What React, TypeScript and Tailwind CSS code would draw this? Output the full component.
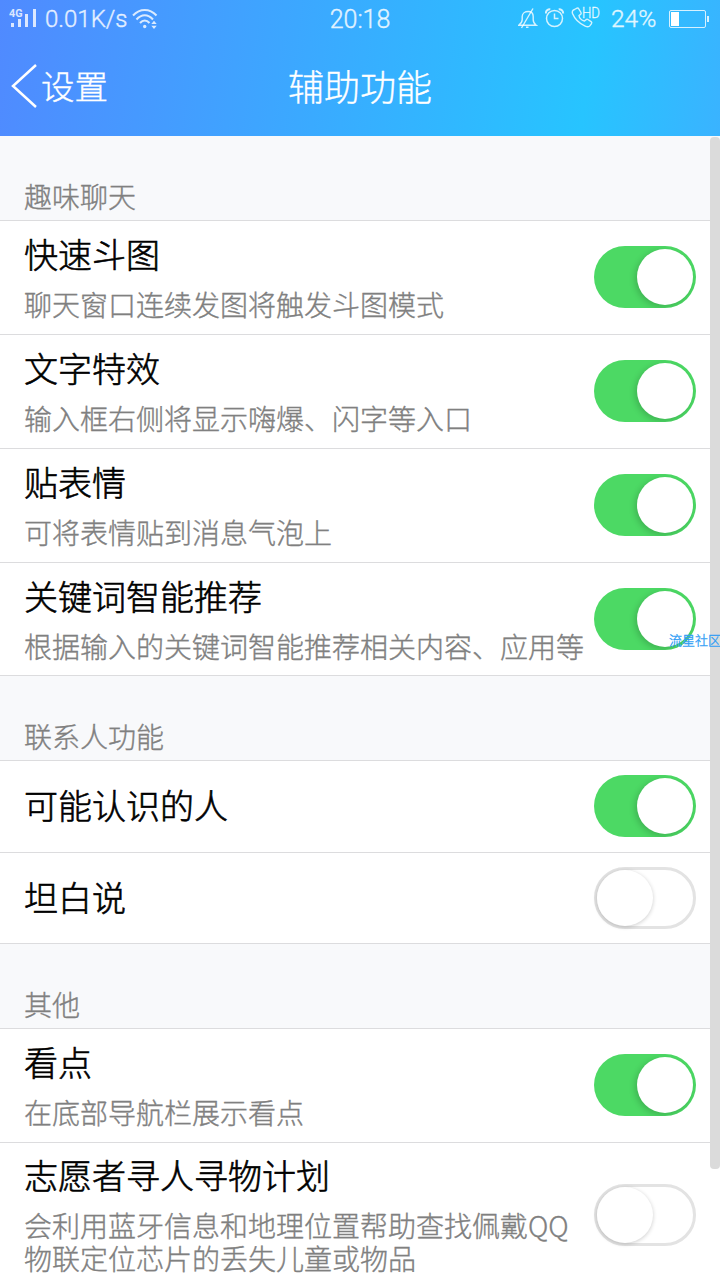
import clsx from "clsx";

type Item = { title: string; desc?: string; on: boolean; height: string };
type Section = { name: string; items: Item[] };

const sections: Section[] = [
  {
    name: "趣味聊天",
    items: [
      { title: "快速斗图", desc: "聊天窗口连续发图将触发斗图模式", on: true, height: "h-[114px] pb-px" },
      { title: "文字特效", desc: "输入框右侧将显示嗨爆、闪字等入口", on: true, height: "h-[114px] pb-px" },
      { title: "贴表情", desc: "可将表情贴到消息气泡上", on: true, height: "h-[114px] pb-px" },
      { title: "关键词智能推荐", desc: "根据输入的关键词智能推荐相关内容、应用等", on: true, height: "h-[113px]" },
    ],
  },
  {
    name: "联系人功能",
    items: [
      { title: "可能认识的人", on: true, height: "h-[92px] pb-px" },
      { title: "坦白说", on: false, height: "h-[91px]" },
    ],
  },
  {
    name: "其他",
    items: [
      { title: "看点", desc: "在底部导航栏展示看点", on: true, height: "h-[114px] pb-px" },
      {
        title: "志愿者寻人寻物计划",
        desc: "会利用蓝牙信息和地理位置帮助查找佩戴QQ物联定位芯片的丢失儿童或物品",
        on: false,
        height: "h-[145px]",
      },
    ],
  },
];

function StatusBar() {
  return (
    <div className="relative flex h-[38px] items-center justify-between text-white/80">
      <div className="flex items-center pl-[9px]">
        <svg width="30" height="22" viewBox="0 0 30 22" fill="currentColor">
          <text x="0" y="8.500" fontSize="10" fontWeight="700" fontFamily="Roboto, sans-serif" textLength="13.500" lengthAdjust="spacingAndGlyphs">4G</text>
          <rect x="2" y="15" width="3" height="4" />
          <rect x="9" y="11" width="3" height="8" />
          <rect x="16" y="6" width="3" height="13" />
          <rect x="24" y="1" width="3" height="18" />
        </svg>
        <span className="ml-[6px] w-[84px] text-[24px] leading-[38px] whitespace-nowrap">0.01K/s</span>
        <svg className="ml-[3px]" width="26" height="22" viewBox="0 0 26 22" fill="none" stroke="currentColor" strokeWidth="2">
          <path d="M1 7.500C8 0 17.500 0 24.500 7.500" />
          <path d="M4.500 11.500C9.500 5.800 16 5.800 21 11.500" />
          <path d="M8 15C11 11.500 14.500 11.500 17.500 15" />
          <circle cx="12.700" cy="18.500" r="1.700" fill="currentColor" stroke="none" />
          <path d="M22 12.800l2.700 3.200h-5.400zM22 21l2.700-3.200h-5.400z" fill="currentColor" stroke="none" />
        </svg>
      </div>
      <span className="absolute left-1/2 -translate-x-1/2 text-[25px] leading-[39px]">20:18</span>
      <div className="flex items-center pr-[11px]">
        <svg width="20" height="22" viewBox="0 0 20 22" fill="none" stroke="currentColor" strokeWidth="1.400">
          <path d="M0.700 17.300h17.500c-2-1.500-3-3-3-5.500V8.500c0-3.200-2-5-5-5s-6 1.800-6 5v3.300c0 2.500-1.500 4-3.500 5.500z" />
          <path d="M15 0.500L3.500 20M8 19.300h2.500" />
        </svg>
        <svg className="ml-[7px]" width="20" height="22" viewBox="0 0 20 22" fill="none" stroke="currentColor" strokeWidth="1.500">
          <circle cx="9.500" cy="10.500" r="8" />
          <path d="M9.500 5.500v5h4" />
          <path d="M0.800 5.500C0.800 3 2.800 1 5.300 1.200M18.200 5.500c0-2.500-2-4.500-4.500-4.300" strokeWidth="2" />
        </svg>
        <svg className="ml-[6px]" width="31" height="26" viewBox="0 0 31 26" fill="none" stroke="currentColor" strokeWidth="1.400">
          <path d="M3.500 3.500L6 2.200c.8-.3 1.400 0 1.800.7L10 6.500c.4.800.2 1.400-.4 1.900L8 9.500c.3 2.500 2.800 4.800 5.500 5.500l1.500-1.300c.6-.5 1.200-.6 1.900-.2l3.200 2.200c.7.500.9 1.200.4 1.900l-1.700 2.300c-1 1.200-2.800 1-4.600.2C8 17.300 3.300 12 1.500 7.500.9 5.500 1.500 4 3.500 3.500z" />
          <text x="11" y="11.500" strokeWidth="0.300" fontSize="14.500" fontFamily="Roboto, sans-serif" fill="currentColor" textLength="18" lengthAdjust="spacingAndGlyphs">HD</text>
        </svg>
        <span className="ml-[9px] w-[48px] text-[24.500px] leading-[38px] whitespace-nowrap">24%</span>
        <svg className="mb-px ml-[10px]" width="40" height="20" viewBox="0 0 40 20" fill="none" stroke="currentColor">
          <rect x="0.500" y="1.500" width="36" height="17" rx="1.500" />
          <rect x="2" y="3" width="8" height="14" fill="white" stroke="none" />
          <rect x="38" y="7" width="2" height="6" fill="currentColor" stroke="none" />
        </svg>
      </div>
    </div>
  );
}

function Toggle({ on }: { on: boolean }) {
  return (
    <div
      className={clsx(
        "flex h-[62px] w-[102px] shrink-0 items-center rounded-full",
        on ? "justify-end overflow-hidden bg-[#4cd964] pr-[3px]" : "border-[3px] border-[#e3e3e3] bg-white",
      )}
    >
      <div
        className={clsx(
          "size-[56px] rounded-full bg-white",
          on ? "shadow-[-2px_2px_6px_rgba(0,0,0,0.18)]" : "shadow-[0_1px_4px_rgba(0,0,0,0.2)]",
        )}
      />
    </div>
  );
}

function Row({ item }: { item: Item }) {
  return (
    <div className={clsx("flex items-center justify-between border-b border-[#dcdcde] bg-white pr-6 pl-6", item.height)}>
      <div className="w-[562px]">
        <div
          className={clsx(
            "text-[34px] leading-[50px] whitespace-nowrap text-black [-webkit-text-stroke:0.6px]",
            item.desc ? "-mt-[5px]" : "-mt-[3px]",
          )}
        >
          {item.title}
        </div>
        {item.desc && <div className="pt-[9px] text-[28px] leading-[33px] break-all text-[#808080]">{item.desc}</div>}
      </div>
      <Toggle on={item.on} />
    </div>
  );
}

export default function App() {
  return (
    <div className="relative h-[1280px] w-[720px] overflow-hidden bg-[#f8f9fb] font-['Noto_Sans_CJK_SC',sans-serif] font-light [-webkit-text-stroke:0.35px]">
      <header className="h-[136px] bg-[linear-gradient(98deg,#508aff_0%,#40a2ff_33%,#27c4ff_81%,#3ab3ff_100%)] font-[Roboto,'Noto_Sans_CJK_SC',sans-serif]">
        <StatusBar />
        <div className="relative flex h-[96px] items-center pl-[11px] text-white">
          <svg width="27" height="44" viewBox="0 0 27 44" fill="none" stroke="currentColor" strokeWidth="2.500">
            <path d="M25 1L2 22L25 43" />
          </svg>
          <span className="mt-[5px] ml-[3px] text-[33.500px]">设置</span>
          <h1 className="absolute top-[24px] left-1/2 -translate-x-1/2 text-[36px] leading-[54px] whitespace-nowrap">辅助功能</h1>
        </div>
      </header>
      {sections.map((section) => (
        <section key={section.name}>
          <h2 className="flex h-[85px] items-end border-b border-[#dcdcde] pb-[4px] pl-6 text-[28px] leading-[40px] text-[#808080]">
            {section.name}
          </h2>
          {section.items.map((item) => (
            <Row key={item.title} item={item} />
          ))}
        </section>
      ))}
      <div className="absolute top-[137px] right-0 h-[1032px] w-[10px] rounded-[4px] bg-[#dbdbdb]" />
      <span className="absolute top-[631px] left-[669px] text-[13px] leading-[18px] whitespace-nowrap text-[#2f9df5]">流星社区</span>
    </div>
  );
}
